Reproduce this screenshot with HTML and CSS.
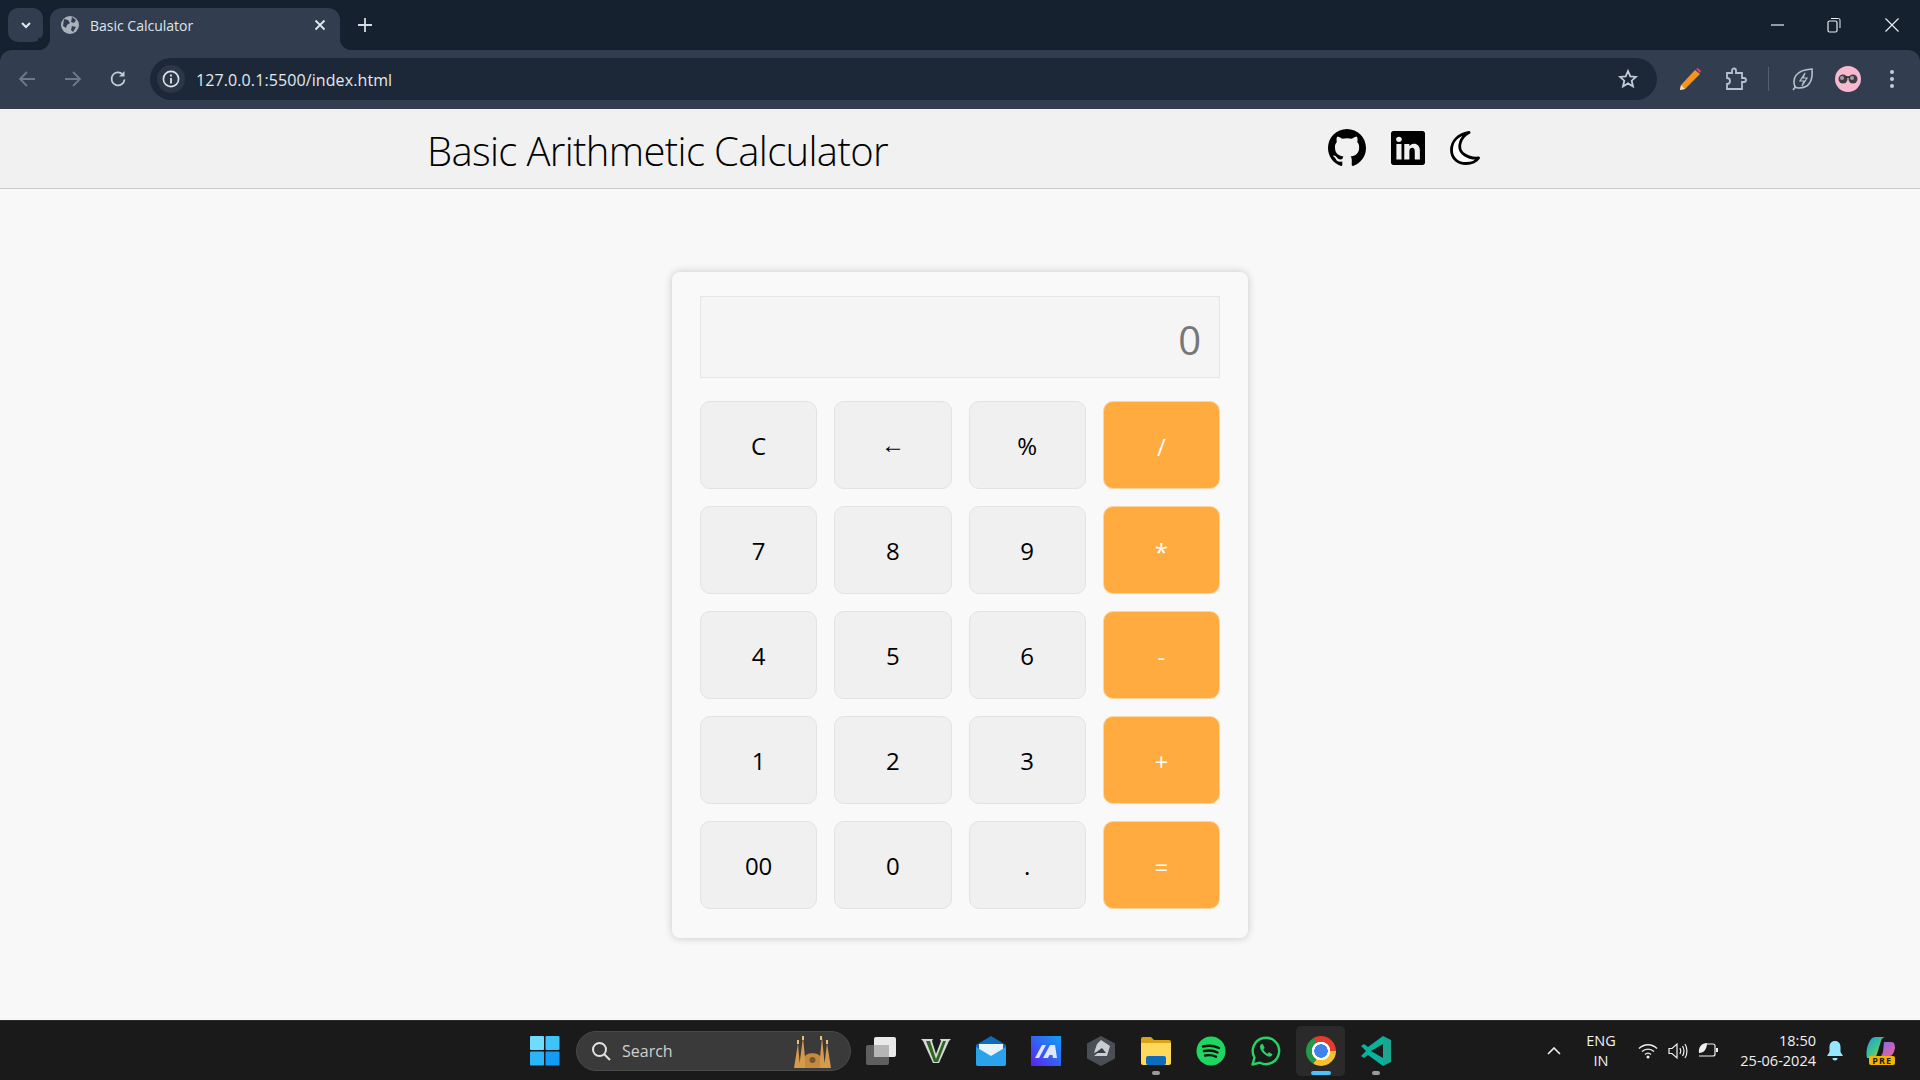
FILE: index.html
```html
<!DOCTYPE html>
<html lang="en">
<head>
    <meta charset="UTF-8">
    <meta name="viewport" content="width=device-width, initial-scale=1.0">
    <title>Basic Calculator</title>
    <link rel="stylesheet" href="styles.css">
</head>
<body>

    <div class="browser-bar">
        <!-- browser tab strip -->
        <div class="tab-strip">
            <div class="tab-search">
                <svg width="14" height="14" viewBox="0 0 14 14"><path d="M3 5l4 4 4-4" fill="none" stroke="#e3e8ee" stroke-width="2"/></svg>
            </div>
            <div class="tab">
                <svg class="favicon" width="18" height="18" viewBox="0 0 18 18"><circle cx="9" cy="9" r="9" fill="#a8b1bc"/><path d="M3 3l4 1 2 3-3 2-1 3-3-2zM11 1l4 3-2 3-3-1zM11 10l4 1-3 5-2-2z" fill="#323e4f"/></svg>
                <span class="tab-title">Basic Calculator</span>
                <svg width="12" height="12" viewBox="0 0 12 12"><path d="M1.5 1.5l9 9M10.500 1.500l-9 9" stroke="#e3e8ee" stroke-width="1.800"/></svg>
            </div>
            <svg class="new-tab" width="14" height="14" viewBox="0 0 14 14"><path d="M7 0v14M0 7h14" stroke="#d5dbe3" stroke-width="1.800"/></svg>
            <div class="window-controls">
                <svg width="14" height="14" viewBox="0 0 14 14"><path d="M0 7h13" stroke="#e8ebef" stroke-width="1.200"/></svg>
                <svg class="restore-btn" width="14" height="16" viewBox="0 0 14 16"><rect x="1" y="4" width="9" height="11" rx="1.500" fill="none" stroke="#e8ebef" stroke-width="1.200"/><path d="M4 1.500h7.500a1.500 1.500 0 0 1 1.500 1.500v8" fill="none" stroke="#e8ebef" stroke-width="1"/></svg>
                <svg width="14" height="14" viewBox="0 0 14 14"><path d="M.5.5l13 13M13.500.5l-13 13" stroke="#e8ebef" stroke-width="1.200"/></svg>
            </div>
        </div>

        <!-- browser toolbar -->
        <div class="toolbar">
            <div class="nav-buttons">
                <svg width="18" height="18" viewBox="0 0 18 18"><path d="M17 9H2M9 2L2 9l7 7" fill="none" stroke="#6f7a88" stroke-width="1.800"/></svg>
                <svg width="18" height="18" viewBox="0 0 18 18"><path d="M1 9h15M9 2l7 7-7 7" fill="none" stroke="#6f7a88" stroke-width="1.800"/></svg>
                <svg class="reload-btn" width="18" height="18" viewBox="0 0 18 18"><path d="M15.500 9.500A6.500 6.500 0 1 1 13.500 4.200" fill="none" stroke="#c5ccd5" stroke-width="1.800"/><path d="M15.500 1v5.500H10z" fill="#c5ccd5"/></svg>
            </div>
            <div class="omnibox">
                <div class="site-info">
                    <svg width="18" height="18" viewBox="0 0 18 18"><circle cx="9" cy="9" r="7.600" fill="none" stroke="#dfe4ea" stroke-width="1.600"/><path d="M9 8v5.500M9 4.500v2" stroke="#dfe4ea" stroke-width="1.800"/></svg>
                </div>
                <span class="url">127.0.0.1:5500/index.html</span>
                <svg class="star" width="20" height="20" viewBox="0 0 20 20"><path d="M10 2l2.300 5.400 5.700.5-4.300 3.800 1.300 5.700L10 14.400l-5 3 1.300-5.700L2 7.900l5.700-.5z" fill="none" stroke="#c5ccd5" stroke-width="1.800"/></svg>
            </div>
            <div class="extensions">
                <svg class="ext-pencil" width="22" height="24" viewBox="0 0 22 24"><path d="M16 3l5 4L6 22l-5 1 1-5z" fill="#f7941d"/><path d="M17 2l2-1 3 3-1 2z" fill="#ee3a6a"/><path d="M2 18l4 4-5 1z" fill="#f3e3c0"/></svg>
                <svg class="ext-puzzle" width="22" height="24" viewBox="0 0 22 24"><path d="M2 6h5V3.500a2 2 0 0 1 4 0V6h6v5h2a2 2 0 0 1 0 4h-2v7H2v-5a2.500 2.500 0 0 0 0-6z" fill="none" stroke="#b7c0cb" stroke-width="1.800"/></svg>
                <span class="toolbar-sep"></span>
                <svg class="ext-leaf" width="22" height="24" viewBox="0 0 22 24"><path d="M3 20C0 12 3 3 20 2c1 12-3 19-13 19-2 0-3 0-4-1zM1 23l3-4" fill="none" stroke="#b7c0cb" stroke-width="1.600"/><path d="M13 6l-5 8h4l-2 5 5-8h-4z" fill="none" stroke="#b7c0cb" stroke-width="1.200"/></svg>
                <div class="avatar">
                    <svg width="22" height="10" viewBox="0 0 22 10"><circle cx="6" cy="5" r="4.500" fill="#3c4046"/><circle cx="16" cy="5" r="4.500" fill="#3c4046"/><path d="M9 3h4" stroke="#222" stroke-width="1.500"/><circle cx="5" cy="4" r="2" fill="#9aa0a6"/><circle cx="15" cy="4" r="2" fill="#9aa0a6"/></svg>
                </div>
                <svg class="ext-menu" width="6" height="20" viewBox="0 0 6 20"><circle cx="3" cy="3" r="2" fill="#c5ccd5"/><circle cx="3" cy="10" r="2" fill="#c5ccd5"/><circle cx="3" cy="17" r="2" fill="#c5ccd5"/></svg>
            </div>
        </div>
    </div>

    <!-- the page itself -->
    <header class="page-header">
        <h1 class="page-title">Basic Arithmetic Calculator</h1>
        <div class="header-icons">
            <svg class="icon-github" viewBox="0 0 16 16"><path d="M8 0C3.580 0 0 3.580 0 8c0 3.540 2.290 6.530 5.470 7.590.4.070.55-.17.55-.38 0-.19-.01-.82-.01-1.490-2.010.37-2.530-.49-2.690-.94-.09-.23-.48-.94-.82-1.130-.28-.15-.68-.52-.01-.53.63-.01 1.080.58 1.230.82.720 1.210 1.870.87 2.330.66.070-.52.28-.87.51-1.070-1.780-.2-3.640-.89-3.640-3.950 0-.87.31-1.590.82-2.150-.08-.2-.36-1.020.08-2.120 0 0 .67-.21 2.200.82.64-.18 1.320-.27 2-.27.68 0 1.360.09 2 .27 1.530-1.040 2.200-.82 2.200-.82.44 1.100.16 1.920.08 2.120.51.56.82 1.270.82 2.150 0 3.070-1.870 3.750-3.650 3.950.29.25.54.73.54 1.480 0 1.070-.01 1.930-.01 2.200 0 .21.15.46.55.38A8.013 8.013 0 0 0 16 8c0-4.420-3.580-8-8-8z"/></svg>
            <svg class="icon-linkedin" viewBox="0 0 16 16"><path d="M0 1.146C0 .513.526 0 1.175 0h13.650C15.474 0 16 .513 16 1.146v13.708c0 .633-.526 1.146-1.175 1.146H1.175C.526 16 0 15.487 0 14.854V1.146zm4.943 12.248V6.169H2.542v7.225h2.401zm-1.200-8.212c.837 0 1.358-.554 1.358-1.248-.015-.709-.52-1.248-1.342-1.248-.822 0-1.359.54-1.359 1.248 0 .694.521 1.248 1.327 1.248h.016zm4.908 8.212V9.359c0-.216.016-.432.08-.586.173-.431.568-.878 1.232-.878.869 0 1.216.662 1.216 1.634v3.865h2.401V9.250c0-2.220-1.184-3.252-2.764-3.252-1.274 0-1.845.7-2.165 1.193v.025h-.016l.016-.025V6.169h-2.400c.03.678 0 7.225 0 7.225h2.400z"/></svg>
            <svg class="icon-moon" viewBox="0 0 30 34"><path d="M19 1.500C8 3.500 1.500 10 1.500 19c0 8.500 6.500 13.500 14.500 13.500 6 0 10.500-2.500 12.500-5.500C18 28 8 22 10 13c1-5 4-9 9-11.500z" fill="#fff" stroke="#000" stroke-width="2.800" stroke-linejoin="round"/></svg>
        </div>
    </header>

    <main class="page-main">
        <div class="calculator">
            <div class="display">0</div>
            <div class="keys">
                <button class="key">C</button>
                <button class="key"><span class="key-arrow">←</span></button>
                <button class="key">%</button>
                <button class="key operator">/</button>
                <button class="key">7</button>
                <button class="key">8</button>
                <button class="key">9</button>
                <button class="key operator">*</button>
                <button class="key">4</button>
                <button class="key">5</button>
                <button class="key">6</button>
                <button class="key operator">-</button>
                <button class="key">1</button>
                <button class="key">2</button>
                <button class="key">3</button>
                <button class="key operator">+</button>
                <button class="key">00</button>
                <button class="key">0</button>
                <button class="key">.</button>
                <button class="key operator">=</button>
            </div>
        </div>
    </main>

    <!-- windows taskbar -->
    <footer class="taskbar">
        <div class="task-slot">
            <svg width="30" height="30" viewBox="0 0 30 30"><rect width="14" height="14" rx="1" fill="#6fdcff"/><rect x="15.500" width="14" height="14" rx="1" fill="#3ec3fb"/><rect y="15.500" width="14" height="14" rx="1" fill="#2db4f8"/><rect x="15.500" y="15.500" width="14" height="14" rx="1" fill="#129cf5"/></svg>
        </div>
        <div class="task-search">
            <svg width="20" height="20" viewBox="0 0 20 20"><circle cx="8.500" cy="8.500" r="6.500" fill="none" stroke="#e2e2e2" stroke-width="2"/><path d="M13 13l6 6" stroke="#e2e2e2" stroke-width="2"/></svg>
            <span class="task-search-label">Search</span>
            <svg class="search-art" width="37" height="33" viewBox="0 0 37 33"><path d="M0 32L4 7l2 25zM5 32L9 1l3 31zM25 32l3-31 3 31zM30 32l3-25 4 25z" fill="#d59a4c"/><path d="M11 32V21c0-5 15-5 15 0v11z" fill="#c58a40"/><circle cx="18.500" cy="24" r="3" fill="#7a5526"/><path d="M9 0v4M27 0v4M4 4v4M33 4v4" stroke="#e8c078" stroke-width="2"/></svg>
        </div>
        <div class="task-slot task-first">
            <svg width="30" height="28" viewBox="0 0 30 28"><rect y="8" width="23" height="20" rx="2" fill="#5f5f5f"/><rect x="8" width="22" height="20" rx="2" fill="#e9e9e9"/><rect x="8" y="8" width="15" height="12" fill="#b5b5b5"/></svg>
        </div>
        <div class="task-slot">
            <svg width="30" height="26" viewBox="0 0 30 26"><path d="M0 1h12l-1 2 4 13 5-13-1-2h11l-2 2-10 22h-6L2 3z" fill="#d8d8d8"/><path d="M5 3h4l6 18 7-18h3L17 24h-4z" fill="#2b6a1e"/></svg>
        </div>
        <div class="task-slot">
            <svg width="30" height="30" viewBox="0 0 30 30"><path d="M0 9L15 0l15 9v19a2 2 0 0 1-2 2H2a2 2 0 0 1-2-2z" fill="#0f6cbd"/><path d="M3 8h24v8l-12 7-12-7z" fill="#e8f3fb"/><path d="M0 11l15 9 15-9v17a2 2 0 0 1-2 2H2a2 2 0 0 1-2-2z" fill="#2aa3ea"/></svg>
        </div>
        <div class="task-slot">
            <svg width="30" height="30" viewBox="0 0 30 30"><defs><linearGradient id="m-bg" x1="0" y1="1" x2="1" y2="0"><stop offset="0" stop-color="#5a22f0"/><stop offset="1" stop-color="#0fa0f8"/></linearGradient></defs><rect width="30" height="30" fill="url(#m-bg)"/><path d="M4 22l7-13h4L8 22zM12 22l7-13h5l2 13h-4l-.5-3h-3l-1.600 3z" fill="#dfe6ff"/></svg>
        </div>
        <div class="task-slot">
            <svg width="28" height="30" viewBox="0 0 28 30"><path d="M14 0l14 7.500v15L14 30 0 22.500v-15z" fill="#4a4f55"/><path d="M14 4l9 6-3 10H7l6-5-6 2 3-9z" fill="#c9ced4"/><path d="M8 17l7-5 4 5z" fill="#3a3e44"/></svg>
        </div>
        <div class="task-slot">
            <svg width="30" height="28" viewBox="0 0 30 28"><path d="M0 2a2 2 0 0 1 2-2h8l3 3h15a2 2 0 0 1 2 2v4H0z" fill="#dba213"/><path d="M0 6h30v20a2 2 0 0 1-2 2H2a2 2 0 0 1-2-2z" fill="#ffd95c"/><rect x="5" y="19" width="20" height="9" rx="2" fill="#0f6cbd"/></svg>
            <span class="task-dot"></span>
        </div>
        <div class="task-slot">
            <svg width="30" height="30" viewBox="0 0 30 30"><circle cx="15" cy="15" r="14.500" fill="#1ed760"/><path d="M7 10.500c6-1.500 11-1 16 1.500M8 15c5-1 9.500-.7 13.500 1.500M9 19.500c4-.8 7.500-.5 11 1.200" fill="none" stroke="#121212" stroke-width="2.400" stroke-linecap="round"/></svg>
        </div>
        <div class="task-slot">
            <svg width="30" height="30" viewBox="0 0 30 30"><path d="M1.500 28.500l2-7A13.200 13.200 0 1 1 9 26.700z" fill="none" stroke="#25d366" stroke-width="2.400" stroke-linejoin="round"/><path d="M10.500 8c-1.500 1-2 3-.8 5.500 1.500 3 4 5.500 7 6.800 2.300 1 4.300-.2 4.800-2l-3.500-2-1.500 1.500c-1.800-.8-3.300-2.300-4.200-4.200l1.400-1.600-1.700-3.700z" fill="#25d366"/></svg>
        </div>
        <div class="task-slot task-active">
            <div class="chrome-logo"></div>
            <span class="task-bar"></span>
        </div>
        <div class="task-slot">
            <svg width="30" height="30" viewBox="0 0 30 30"><path d="M22 0l8 4v22l-8 4z" fill="#1aa78f"/><path d="M22 0v8L10 15l12 7v8L7 19l-4 3-3-2 5-5-5-5 3-2 4 3z" fill="#07b39b"/></svg>
            <span class="task-dot"></span>
        </div>

        <div class="tray">
            <svg class="tray-chevron" width="14" height="8" viewBox="0 0 14 8"><path d="M1 7l6-6 6 6" fill="none" stroke="#f0f0f0" stroke-width="1.600"/></svg>
            <div class="tray-lang"><span>ENG</span><span>IN</span></div>
            <div class="tray-status">
                <svg width="20" height="16" viewBox="0 0 20 16"><path d="M1 5.500c5-5 13-5 18 0M4 8.500c3.500-3.300 8.500-3.300 12 0M7 11.500c1.700-1.500 4.300-1.500 6 0" fill="none" stroke="#f0f0f0" stroke-width="1.300"/><circle cx="10" cy="14" r="1.500" fill="#f0f0f0"/></svg>
                <svg width="20" height="18" viewBox="0 0 20 18"><path d="M1 6.500h3l5-4.500v14l-5-4.500H1zM12 6c1 1.800 1 4.200 0 6M14.500 4c1.800 3 1.800 7 0 10M17 2c2.600 4 2.600 10 0 14" fill="none" stroke="#f0f0f0" stroke-width="1.200"/></svg>
                <svg width="20" height="18" viewBox="0 0 20 18"><path d="M9 2h6a2 2 0 0 1 2 2v8a2 2 0 0 1-2 2H1" fill="none" stroke="#f0f0f0" stroke-width="1.200"/><path d="M18 6h2v4h-2z" fill="#f0f0f0"/><path d="M1 11C0 5 4 1 9 1c0 6-3 10-8 10z" fill="#f0f0f0"/></svg>
            </div>
            <div class="tray-clock"><span>18:50</span><span>25-06-2024</span></div>
            <svg class="tray-bell" width="16" height="20" viewBox="0 0 16 20"><path d="M8 0c3.500 0 5.500 2.500 5.500 6v5l2.500 4H0l2.500-4V6C2.500 2.500 4.500 0 8 0z" fill="#96e6ff"/><path d="M5.500 17h5a2.500 2.500 0 0 1-5 0z" fill="#96e6ff"/></svg>
            <div class="tray-copilot">
                <svg width="29" height="24" viewBox="0 0 29 24"><defs><linearGradient id="c-a" x1="0" y1="0" x2="1" y2="1"><stop offset="0" stop-color="#1f9be8"/><stop offset=".5" stop-color="#3fc48a"/><stop offset="1" stop-color="#f4c23a"/></linearGradient><linearGradient id="c-b" x1="0" y1="0" x2="1" y2="1"><stop offset="0" stop-color="#7b6cf0"/><stop offset="1" stop-color="#f0609a"/></linearGradient></defs><path d="M9 0h11c-3 0-4 1-5 4l-4 13c-1 3-3 4-6 4H1C-1 14 3 0 9 0z" fill="url(#c-a)"/><path d="M18 5h7c3 0 4 2 4 6-1 5-3 9-8 9h-9c3 0 4-2 5-5z" fill="url(#c-b)"/></svg>
                <span class="pre-badge">PRE</span>
            </div>
        </div>
    </footer>

</body>
</html>
```

FILE: styles.css
```css
* {
    box-sizing: border-box;
}

html, body {
    height: 100%;
}

body {
    margin: 0;
    display: flex;
    flex-direction: column;
    height: 100vh;
    overflow: hidden;
    font-family: "Open Sans", "Noto Sans", sans-serif;
    background-color: #f8f8f8;
    color: #000;
}

svg {
    display: block;
    flex-shrink: 0;
}

/* browser chrome */
.browser-bar {
    background-color: #162130;
}

.tab-strip {
    display: flex;
    align-items: flex-start;
    height: 50px;
    padding: 8px 0 0 8px;
}

.tab-search {
    display: flex;
    align-items: center;
    justify-content: center;
    width: 35px;
    height: 34px;
    border-radius: 10px;
    background-color: #323e4f;
}

.tab {
    position: relative;
    display: flex;
    align-items: center;
    width: 290px;
    height: 42px;
    margin-left: 7px;
    padding: 0 14px 8px 11px;
    border-radius: 12px 12px 0 0;
    background-color: #323e4f;
}

.tab::before,
.tab::after {
    content: "";
    position: absolute;
    bottom: 0;
    width: 12px;
    height: 12px;
}

.tab::before {
    left: -12px;
    background: radial-gradient(circle at 0 0, #162130 12px, #323e4f 12.500px);
}

.tab::after {
    right: -12px;
    background: radial-gradient(circle at 100% 0, #162130 12px, #323e4f 12.500px);
}

.tab-title {
    flex: 1;
    margin-left: 11px;
    font-size: 14px;
    color: #dfe4ea;
}

.new-tab {
    margin: 10px 0 0 18px;
}

.window-controls {
    display: flex;
    align-items: center;
    gap: 43px;
    margin: 9px 21px 0 auto;
}

.restore-btn {
    margin: 0 1px 0 -1px;
}

.toolbar {
    display: flex;
    align-items: center;
    height: 59px;
    padding: 0 0 1px 0;
    border-radius: 12px 12px 0 0;
    background-color: #323e4f;
}

.nav-buttons {
    display: flex;
    align-items: center;
    gap: 28px;
    width: 150px;
    padding-left: 18px;
}

.reload-btn {
    margin-left: -1px;
}

.omnibox {
    display: flex;
    align-items: center;
    width: 1507px;
    height: 42px;
    padding: 0 19px 0 7px;
    border-radius: 21px;
    background-color: #1c2838;
}

.site-info {
    display: flex;
    align-items: center;
    justify-content: center;
    width: 28px;
    height: 28px;
    border-radius: 50%;
    background-color: #2b3747;
}

.url {
    flex: 1;
    margin-left: 11px;
    padding-top: 1px;
    font-size: 16px;
    letter-spacing: 0.1px;
    color: #e3e8ee;
}

.extensions {
    display: flex;
    align-items: center;
    flex: 1;
    padding-left: 22px;
}

.ext-puzzle {
    margin-left: 24px;
}

.toolbar-sep {
    width: 1px;
    height: 24px;
    margin: 0 23px 0 21px;
    background-color: #556171;
}

.avatar {
    display: flex;
    align-items: center;
    justify-content: center;
    width: 26px;
    height: 26px;
    margin-left: 21px;
    border-radius: 50%;
    background-color: #f8b8cf;
}

.ext-menu {
    margin-left: 28px;
}

/* page header */
.page-header {
    display: flex;
    align-items: center;
    justify-content: space-between;
    height: 80px;
    padding: 0 440px 0 427px;
    border-bottom: 1px solid #ccc;
    background-color: #f1f1f1;
}

.page-title {
    margin: 4px 0 0;
    font-size: 40px;
    font-weight: 300;
    letter-spacing: -0.65px;
}

.header-icons {
    display: flex;
    align-items: center;
    gap: 25px;
    margin-bottom: 2px;
}

.icon-github {
    width: 38px;
    height: 38px;
}

.icon-linkedin {
    width: 34px;
    height: 34px;
}

.icon-moon {
    width: 30px;
    height: 34px;
}

/* calculator */
.page-main {
    flex: 1;
    display: flex;
    align-items: center;
    justify-content: center;
    padding-top: 1px;
}

.calculator {
    width: 576px;
    height: 666px;
    padding: 24px 28px;
    border-radius: 8px;
    background-color: #f9f9f9;
    box-shadow: 0 0 8px rgba(0, 0, 0, 0.2);
}

.display {
    height: 82px;
    padding: 0 18px;
    border: 1px solid #e6e6e6;
    background-color: #f5f5f5;
    color: #777;
    font-size: 40px;
    line-height: 86px;
    text-align: right;
}

.keys {
    display: grid;
    grid-template-columns: repeat(4, 1fr);
    grid-auto-rows: 88px;
    gap: 17px;
    margin-top: 23px;
}

.key {
    padding: 0;
    border: 1px solid #e3e3e3;
    border-radius: 10px;
    background-color: #f0f0f0;
    color: #000;
    font-family: inherit;
    font-size: 24px;
}

.key-arrow {
    display: block;
    margin-bottom: 3px;
}

.operator {
    padding-top: 2px;
    border-color: #fdd5a0;
    background-color: #ffab40;
    color: #fff;
}

/* taskbar */
.taskbar {
    display: flex;
    align-items: center;
    height: 60px;
    padding-left: 517px;
    border-top: 1px solid #2e2e2e;
    background-color: #1a1a1a;
}

.task-slot {
    position: relative;
    display: flex;
    align-items: center;
    justify-content: center;
    width: 55px;
    height: 50px;
}

.task-first {
    margin-left: 2px;
}

.task-active::before {
    content: "";
    position: absolute;
    left: 3px;
    top: 0;
    width: 49px;
    height: 50px;
    border-radius: 5px;
    background-color: #2a2a2a;
}

.task-dot,
.task-bar {
    position: absolute;
    bottom: 1px;
    left: 50%;
    height: 4px;
    border-radius: 2px;
}

.task-dot {
    width: 8px;
    margin-left: -4px;
    background-color: #9a9a9a;
}

.task-bar {
    width: 20px;
    margin-left: -10px;
    background-color: #4cc2ff;
}

.chrome-logo {
    position: relative;
    width: 30px;
    height: 30px;
    border-radius: 50%;
    background:
        radial-gradient(circle, #3f83ea 0 6.500px, #fff 7px 9px, transparent 9.500px),
        conic-gradient(#e33b2e 0 90deg, #f9c02c 90deg 210deg, #23994c 210deg 330deg, #e33b2e 330deg);
}

.task-search {
    display: flex;
    align-items: center;
    width: 275px;
    height: 40px;
    margin-left: 4px;
    padding: 0 19px 0 14px;
    border: 1px solid #4a4a4a;
    border-radius: 20px;
    background-color: #3a3a3a;
}

.task-search-label {
    flex: 1;
    margin-left: 11px;
    font-size: 16px;
    color: #cfcfcf;
}

.search-art {
    margin-top: 3px;
}

.tray {
    display: flex;
    align-items: center;
    margin-left: 144px;
    color: #f0f0f0;
    font-size: 14.500px;
}

.tray-lang {
    display: flex;
    flex-direction: column;
    align-items: center;
    width: 40px;
    margin-left: 20px;
    line-height: 20px;
}

.tray-status {
    display: flex;
    align-items: center;
    gap: 10px;
    margin-left: 17px;
}

.tray-clock {
    display: flex;
    flex-direction: column;
    align-items: flex-end;
    width: 98px;
    line-height: 20px;
}

.tray-bell {
    margin-left: 11px;
}

.tray-copilot {
    position: relative;
    height: 28px;
    margin-left: 23px;
}

.pre-badge {
    position: absolute;
    right: 0;
    bottom: 0;
    padding: 0 3px;
    border-radius: 2px;
    background-color: #f6b400;
    color: #1a1a1a;
    font-size: 9px;
    font-weight: 700;
    line-height: 9px;
    letter-spacing: 1px;
}
```
